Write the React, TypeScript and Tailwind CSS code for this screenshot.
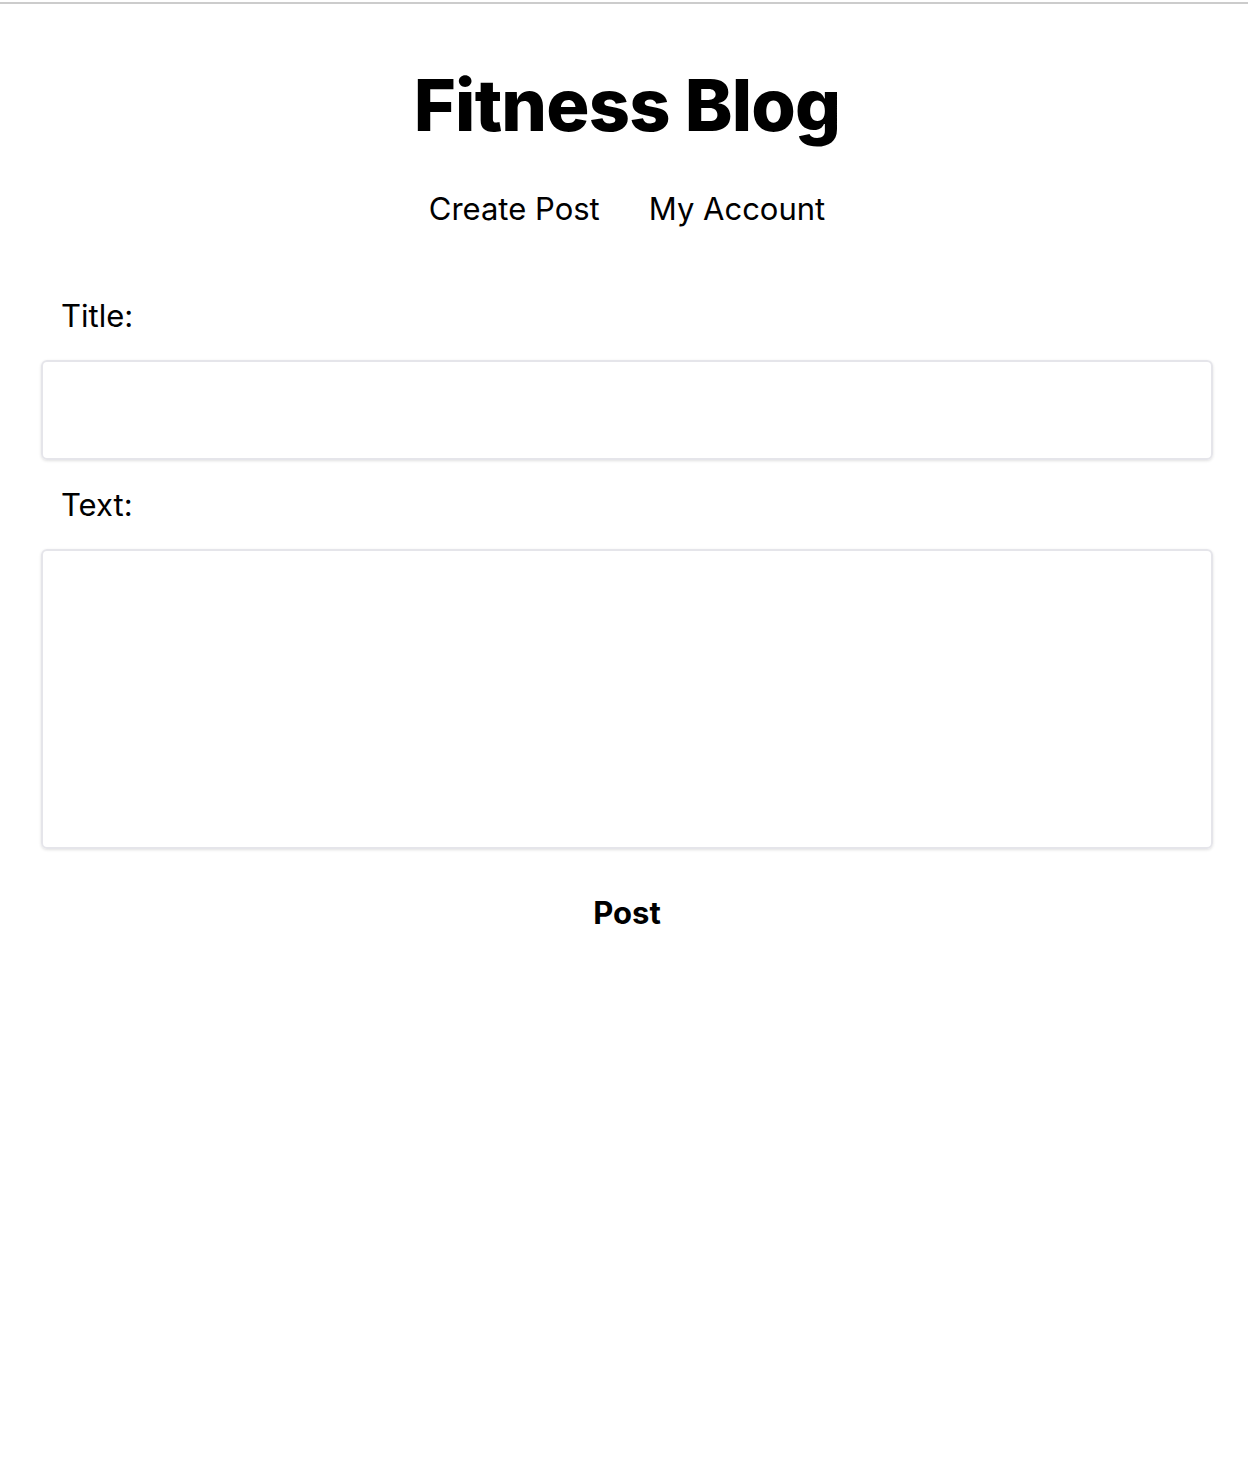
export default function App() {
  return (
    <div className="min-h-screen bg-white font-['Inter',sans-serif] text-black">
      <div className="pt-[2px]">
        <div className="h-[2px] bg-[#cccccc]" />
      </div>

      <div className="ml-[41px] w-[1172px]">
        {/* Header */}
        <h1 className="mt-[61px] text-center text-[72px] leading-[80px] font-extrabold tracking-[-0.8px]">
          Fitness Blog
        </h1>
        <nav className="mt-[44px] flex justify-center gap-[49px] text-[31px] leading-[40px]">
          <a href="#">Create Post</a>
          <a href="#">My Account</a>
        </nav>

        {/* Form */}
        <form className="mt-[67px]">
          <label className="block px-[20px] text-[31px] leading-[40px]">Title:</label>
          <input
            type="text"
            className="mt-[24px] block h-[100px] w-full rounded-[6px] border-2 border-[#e5e5ea] shadow-[0_1px_3px_rgba(0,0,0,0.12)] outline-none"
          />
          <label className="mt-[25px] block px-[20px] text-[31px] leading-[40px]">Text:</label>
          <textarea className="mt-[24px] block h-[300px] w-full resize-none rounded-[6px] border-2 border-[#e5e5ea] shadow-[0_1px_3px_rgba(0,0,0,0.12)] outline-none" />
          <div className="mt-[44px] flex justify-center">
            <button type="button" className="text-[31px] leading-[40px] font-bold">
              Post
            </button>
          </div>
        </form>
      </div>
    </div>
  )
}
